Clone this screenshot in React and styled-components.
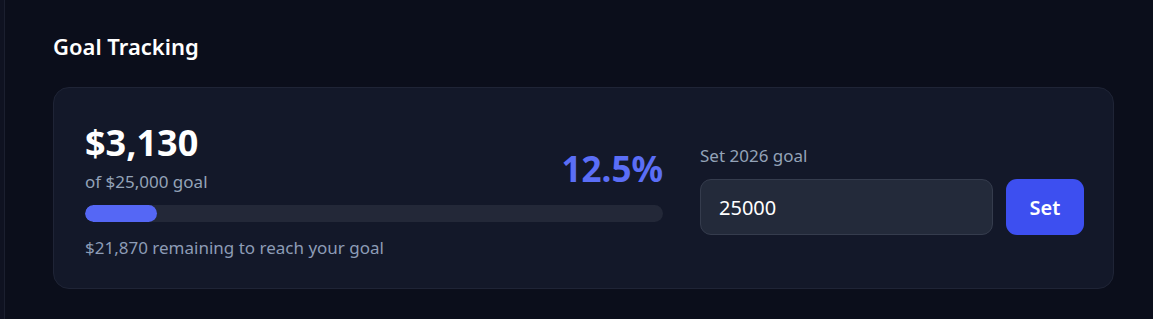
import React, { useState } from 'react'
import styled, { createGlobalStyle } from 'styled-components'

const GlobalStyle = createGlobalStyle`
  html, body {
    margin: 0;
    padding: 0;
    background: #0b0e1b;
    font-family: "Noto Sans", "Open Sans", sans-serif;
  }
  * { box-sizing: border-box; }
`

const Page = styled.div`
  display: flex;
  min-height: 319px;
  background: #0b0e1b;
`

const SideEdge = styled.div`
  width: 5px;
  background: #0f1221;
  border-right: 1px solid #1b1f2f;
`

const Main = styled.main`
  flex: 1;
  padding: 32px 39px 30px 48px;
`

const Heading = styled.h2`
  margin: 0 0 27px;
  font-size: 22px;
  line-height: 28px;
  font-weight: 600;
  color: #ffffff;
`

const Card = styled.section`
  display: flex;
  align-items: center;
  gap: 37px;
  padding: 35px 29px 28px 31px;
  background: #131829;
  border: 1px solid #1f2436;
  border-radius: 16px;
`

const Progress = styled.div`
  flex: 1;
  display: flex;
  flex-direction: column;
`

const Header = styled.div`
  display: flex;
  justify-content: space-between;
  align-items: flex-end;
`

const Amount = styled.div`
  font-size: 36px;
  line-height: 40px;
  font-weight: 700;
  color: #ffffff;
`

const Muted = styled.div`
  margin-top: ${p => p.$top || 0}px;
  font-size: 17px;
  line-height: 24px;
  color: ${p => p.$color || '#94a3b8'};
`

const Percent = styled.div`
  margin-bottom: 5px;
  font-size: 35px;
  line-height: 40px;
  font-weight: 700;
  color: #5b6ef6;
`

const Track = styled.div`
  margin-top: 11px;
  height: 17px;
  border-radius: 9px;
  background: #232838;
  overflow: hidden;
`

const Fill = styled.div`
  height: 100%;
  border-radius: 9px;
  background: #5567f5;
`

const GoalForm = styled.form`
  width: 384px;
  padding-bottom: 4px;
  display: flex;
  flex-direction: column;
`

const Label = styled.label`
  margin-bottom: 11px;
  font-size: 17px;
  line-height: 24px;
  color: #94a3b8;
`

const Row = styled.div`
  display: flex;
  gap: 13px;
`

const Input = styled.input`
  flex: 1;
  min-width: 0;
  height: 56px;
  padding: 0 18px;
  background: #232a3a;
  border: 1px solid #353c4d;
  border-radius: 11px;
  color: #ffffff;
  font-family: inherit;
  font-size: 20px;
  outline: none;
`

const Button = styled.button`
  width: 78px;
  height: 56px;
  border: none;
  border-radius: 11px;
  background: #3d4ff0;
  color: #ffffff;
  font-family: inherit;
  font-size: 20px;
  font-weight: 600;
  cursor: pointer;
`

export default function App() {
  const [goal, setGoal] = useState('25000')
  const current = 3130
  const target = 25000
  const pct = (current / target) * 100

  return (
    <Page>
      <GlobalStyle />
      <SideEdge />
      <Main>
        <Heading>Goal Tracking</Heading>
        <Card>
          <Progress>
            <Header>
              <div>
                <Amount>$3,130</Amount>
                <Muted $top={7}>of $25,000 goal</Muted>
              </div>
              <Percent>{pct.toFixed(1)}%</Percent>
            </Header>
            <Track>
              <Fill style={{ width: `${pct}%` }} />
            </Track>
            <Muted $top={14} $color="#8d9cb6">$21,870 remaining to reach your goal</Muted>
          </Progress>
          <GoalForm onSubmit={e => e.preventDefault()}>
            <Label htmlFor="goal">Set 2026 goal</Label>
            <Row>
              <Input id="goal" value={goal} onChange={e => setGoal(e.target.value)} />
              <Button type="submit">Set</Button>
            </Row>
          </GoalForm>
        </Card>
      </Main>
    </Page>
  )
}
